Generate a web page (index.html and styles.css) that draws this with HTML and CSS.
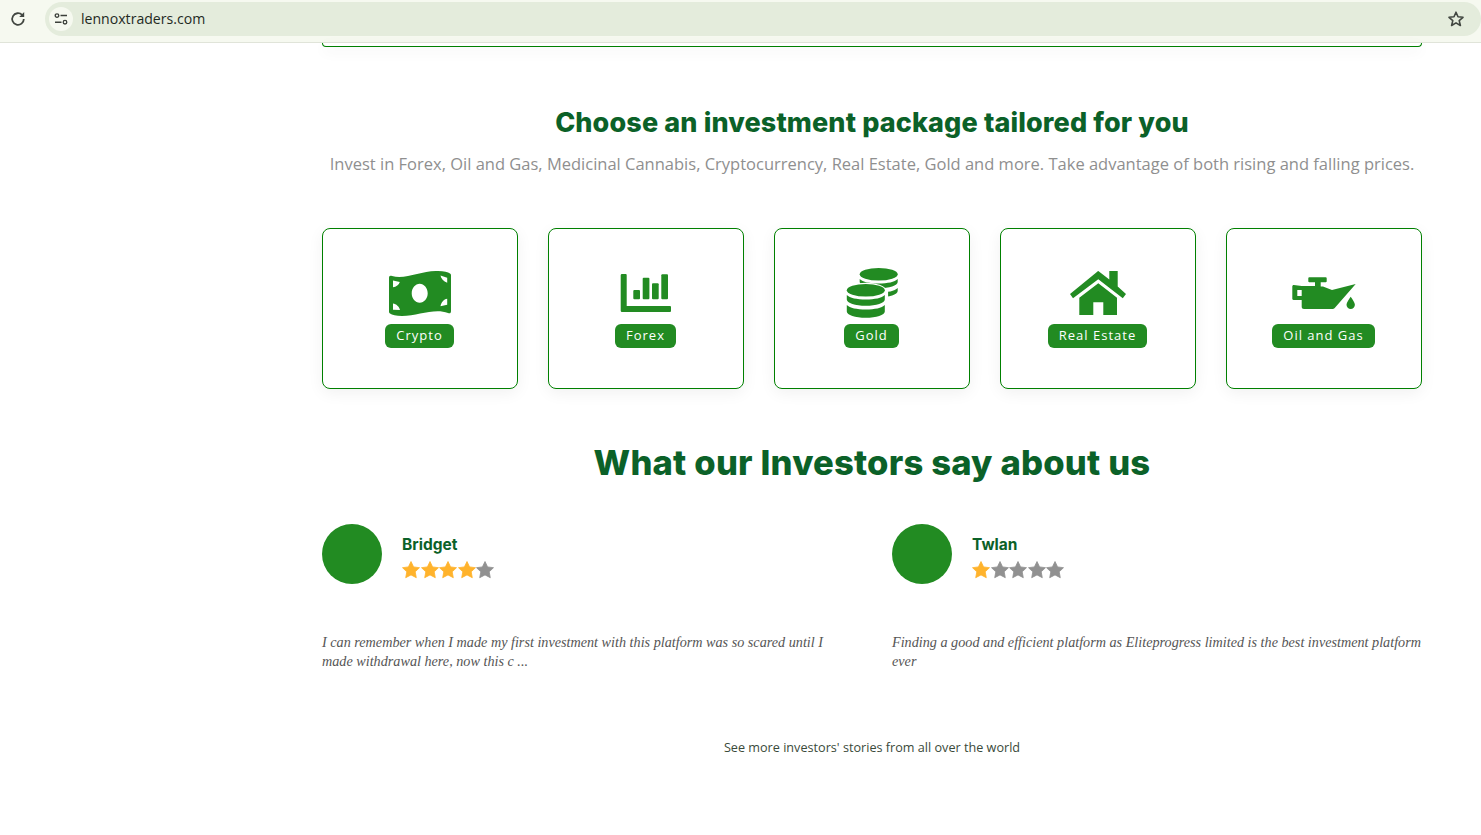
FILE: index.html
```html
<!DOCTYPE html>
<html lang="en">
<head>
<meta charset="utf-8">
<title>lennoxtraders.com</title>
<link rel="stylesheet" href="styles.css">
</head>
<body>
<header class="toolbar">
  <svg class="reload" viewBox="0 0 16 16"><path d="M13.800 8a5.800 5.800 0 1 1-1.700-4.100" fill="none" stroke="#414640" stroke-width="1.800"/><path d="M14.200 1v5H9.200z" fill="#414640"/></svg>
  <div class="omnibox">
    <span class="site-chip">
      <svg viewBox="0 0 14 12" class="tune"><circle cx="3" cy="2.600" r="1.800" fill="none" stroke="#3c403b" stroke-width="1.300"/><path d="M6.500 2.600h6.500M1 9.200h6.500" stroke="#3c403b" stroke-width="1.500"/><circle cx="11" cy="9.200" r="1.800" fill="none" stroke="#3c403b" stroke-width="1.300"/></svg>
    </span>
    <span class="url">lennoxtraders.com</span>
    <svg class="bookmark" viewBox="0 0 18 18"><path d="M9 2.200l2 4.600 5 .5-3.800 3.300 1.200 4.900L9 12.900l-4.400 2.600 1.200-4.900L2 7.300l5-.5z" fill="none" stroke="#414640" stroke-width="1.600" stroke-linejoin="round"/></svg>
  </div>
</header>

<main class="content">
  <div class="top-card"></div>

  <section class="packages">
    <h2 class="pkg-title">Choose an investment package tailored for you</h2>
    <p class="pkg-sub">Invest in Forex, Oil and Gas, Medicinal Cannabis, Cryptocurrency, Real Estate, Gold and more. Take advantage of both rising and falling prices.</p>

    <div class="pkg-grid">
      <article class="pkg-card">
        <svg class="pkg-icon" viewBox="0 0 64 50"><path fill-rule="evenodd" d="M1 10C1 8 2 7.300 4 8 18 12 34 2 50 3c6 .4 10 1 12 2.500 1 .5 1 1.500 1 2.500v35c0 2-1 2.800-3 2C46 40 30 48 14 48c-6 0-10-1-12-2.500-1-.5-1-1.500-1-2.500zM31.700 15.800c-4.400 0-8 4.300-8 9.500s3.600 9.500 8 9.500 8-4.300 8-9.500-3.600-9.500-8-9.500zM5 12.500v6.700c3.200-.2 6-2.200 6.800-5.100zM52.500 7.500c.5 3.200 3 6 6.700 7.200V9.800zM59.200 30.800c-3.400.6-6 3.500-6.700 7.400l6.700-1.500zM5 35.500v6.300l7 .2C11.300 38.500 8.300 36 5 35.500z"/></svg>
        <span class="pill">Crypto</span>
      </article>
      <article class="pkg-card">
        <svg class="pkg-icon" viewBox="0 0 64 50"><path d="M8 6h3.700a1 1 0 0 1 1 1v31H56a1 1 0 0 1 1 1v4a1 1 0 0 1-1 1H8a1.300 1.300 0 0 1-1.300-1.300V7.300A1.300 1.300 0 0 1 8 6z"/><rect x="19.300" y="22" width="6.700" height="9.300" rx="1"/><rect x="28.700" y="9.700" width="6.700" height="21.600" rx="1"/><rect x="38" y="15.300" width="6.700" height="16" rx="1"/><rect x="47.300" y="6.300" width="6.700" height="25" rx="1"/></svg>
        <span class="pill">Forex</span>
      </article>
      <article class="pkg-card">
        <svg class="pkg-icon" viewBox="0 0 64 50"><ellipse cx="38.700" cy="6.300" rx="19" ry="6.300"/><path d="M19.700 11v3c0 3.500 8.500 6.300 19 6.300s19-2.800 19-6.300v-3c-3 3-10 4.500-19 4.500s-16-1.500-19-4.500z"/><path d="M19.700 20v3c0 3.500 8.500 6.300 19 6.300s19-2.800 19-6.300v-3c-3 3-10 4.500-19 4.500s-16-1.500-19-4.500z"/><path d="M3.500 22.300h44.600V50H3.500z" fill="#fff"/><ellipse cx="25.800" cy="22.300" rx="19" ry="6.300" stroke="#fff" stroke-width="2.400" paint-order="stroke"/><path d="M6.800 27v4.500c0 3.500 8.500 6.300 19 6.300s19-2.800 19-6.300V27c-3 3-10 4.500-19 4.500s-16-1.500-19-4.500z"/><path d="M6.800 37v6.500c0 3.500 8.500 6.300 19 6.300s19-2.800 19-6.300V37c-3 3-10 4.500-19 4.500s-16-1.500-19-4.500z"/></svg>
        <span class="pill">Gold</span>
      </article>
      <article class="pkg-card">
        <svg class="pkg-icon" viewBox="0 0 64 50"><path d="M32.300 3L43.300 11.500V3h8.400v15.500L60 26l-3.200 4.300L32.300 11.300 7 30.300 4 26 30 4.800c.8-.7 1.600-1.800 2.300-1.800z"/><path fill-rule="evenodd" d="M32.300 15.300L51 29.800V47H37.300V34.300h-10V47H13.300V29.800z"/></svg>
        <span class="pill">Real Estate</span>
      </article>
      <article class="pkg-card">
        <svg class="pkg-icon" viewBox="0 0 64 50"><path fill-rule="evenodd" d="M17.300 9.300h16.400a1 1 0 0 1 1 1v3a1 1 0 0 1-1 1h-5v4.200h2.300L40 22l23.700-6-21 24c-.8.800-1.500 1-2.500 1H12c-1.400 0-2.300-1-2.300-2.300V32H1.500C.8 32 .3 31.500.3 30.800V18.500c0-.8.500-1.500 1.500-1.500l7.900 1h13.300v-3.700h-5.700a1 1 0 0 1-1-1v-3a1 1 0 0 1 1-1zM5.300 22v6h4.400v-6z"/><path d="M58.700 28.700c1.800 2.900 4.200 5.500 4.200 8.100a4.200 4.200 0 0 1-8.400 0c0-2.600 2.400-5.200 4.200-8.100z"/></svg>
        <span class="pill">Oil and Gas</span>
      </article>
    </div>
  </section>

  <section class="reviews">
    <h2 class="rev-title">What our Investors say about us</h2>
    <div class="rev-grid">
      <article class="review">
        <div class="person">
          <span class="avatar"></span>
          <div class="who">
            <h3 class="name">Bridget</h3>
            <div class="stars">
              <svg class="star on" viewBox="0 0 18 17"><path d="M9 .5l2.600 5.400 5.900.8-4.300 4.100 1.100 5.900L9 13.900l-5.300 2.800 1.100-5.900L.5 6.700l5.900-.8z"/></svg>
              <svg class="star on" viewBox="0 0 18 17"><path d="M9 .5l2.600 5.400 5.900.8-4.300 4.100 1.100 5.900L9 13.900l-5.300 2.800 1.100-5.900L.5 6.700l5.900-.8z"/></svg>
              <svg class="star on" viewBox="0 0 18 17"><path d="M9 .5l2.600 5.400 5.900.8-4.300 4.100 1.100 5.900L9 13.900l-5.300 2.800 1.100-5.900L.5 6.700l5.900-.8z"/></svg>
              <svg class="star on" viewBox="0 0 18 17"><path d="M9 .5l2.600 5.400 5.900.8-4.300 4.100 1.100 5.900L9 13.900l-5.300 2.800 1.100-5.900L.5 6.700l5.900-.8z"/></svg>
              <svg class="star" viewBox="0 0 18 17"><path d="M9 .5l2.600 5.400 5.900.8-4.300 4.100 1.100 5.900L9 13.900l-5.300 2.800 1.100-5.900L.5 6.700l5.900-.8z"/></svg>
            </div>
          </div>
        </div>
        <p class="quote">I can remember when I made my first investment with this platform was so scared until I made withdrawal here, now this c ...</p>
      </article>
      <article class="review">
        <div class="person">
          <span class="avatar"></span>
          <div class="who">
            <h3 class="name">Twlan</h3>
            <div class="stars">
              <svg class="star on" viewBox="0 0 18 17"><path d="M9 .5l2.600 5.400 5.900.8-4.300 4.100 1.100 5.900L9 13.900l-5.300 2.800 1.100-5.900L.5 6.700l5.900-.8z"/></svg>
              <svg class="star" viewBox="0 0 18 17"><path d="M9 .5l2.600 5.400 5.900.8-4.300 4.100 1.100 5.900L9 13.900l-5.300 2.800 1.100-5.900L.5 6.700l5.900-.8z"/></svg>
              <svg class="star" viewBox="0 0 18 17"><path d="M9 .5l2.600 5.400 5.900.8-4.300 4.100 1.100 5.900L9 13.900l-5.300 2.800 1.100-5.900L.5 6.700l5.900-.8z"/></svg>
              <svg class="star" viewBox="0 0 18 17"><path d="M9 .5l2.600 5.400 5.900.8-4.300 4.100 1.100 5.900L9 13.900l-5.300 2.800 1.100-5.900L.5 6.700l5.900-.8z"/></svg>
              <svg class="star" viewBox="0 0 18 17"><path d="M9 .5l2.600 5.400 5.900.8-4.300 4.100 1.100 5.900L9 13.900l-5.300 2.800 1.100-5.900L.5 6.700l5.900-.8z"/></svg>
            </div>
          </div>
        </div>
        <p class="quote">Finding a good and efficient platform as Eliteprogress limited is the best investment platform ever</p>
      </article>
    </div>
    <p class="more">See more investors' stories from all over the world</p>
  </section>
</main>
</body>
</html>
```

FILE: styles.css
```css
* { box-sizing: border-box; }
html, body { margin: 0; padding: 0; height: 100%; overflow: hidden; background: #fff; }
body { font-family: "Open Sans", sans-serif; }

.toolbar {
  height: 43px;
  background: #f6f9f0;
  border-bottom: 1px solid #e0e4d9;
  display: flex;
  align-items: flex-start;
  padding: 2px 0 0 10px;
}
.reload { width: 16px; height: 16px; margin: 9px 19px 0 0; flex: none; }
.omnibox {
  flex: 1;
  height: 34px;
  border-radius: 17px;
  background: #e4ecdc;
  display: flex;
  align-items: center;
  padding: 0 16px 0 4px;
}
.site-chip {
  width: 24px; height: 24px;
  border-radius: 50%;
  background: #f6f9f0;
  display: flex; align-items: center; justify-content: center;
  flex: none;
}
.tune { width: 14px; height: 12px; }
.url { margin: -2px 0 0 8px; font-size: 14.1px; color: #1f2a1f; flex: 1; }
.bookmark { width: 18px; height: 18px; flex: none; }

.content { width: 1100px; margin-left: 322px; }

.top-card {
  height: 4px;
  border: 1px solid #008000;
  border-top: 0;
  border-radius: 0 0 6px 6px;
  box-shadow: 0 4px 14px rgba(0,0,0,.07);
}

.pkg-title {
  margin: 59px 0 0;
  text-align: center;
  font-family: Inter, sans-serif;
  font-size: 27px;
  line-height: 33px;
  font-weight: 800;
  letter-spacing: .13px;
  color: #0b6128;
}
.pkg-sub {
  margin: 13px 0 0;
  text-align: center;
  font-size: 16.5px;
  line-height: 24px;
  color: #8f8f8f;
  white-space: nowrap;
}
.pkg-grid {
  margin-top: 52px;
  display: grid;
  grid-template-columns: repeat(5, 1fr);
  gap: 30px;
}
.pkg-card {
  height: 161px;
  border: 1px solid #008000;
  border-radius: 8px;
  background: #fff;
  box-shadow: 0 4px 16px rgba(0,0,0,.06);
  display: flex;
  flex-direction: column;
  align-items: center;
  padding-top: 39px;
}
.pkg-icon { width: 64px; height: 50px; fill: #228b22; display: block; flex: none; }
.pill {
  margin: 6px 1px 0 0;
  height: 24px;
  padding: 0 11px;
  border-radius: 6px;
  background: #228b22;
  color: #fff;
  font-size: 13px;
  line-height: 23px;
  letter-spacing: 1px;
}

.rev-title {
  margin: 52px 0 0;
  text-align: center;
  font-family: Inter, sans-serif;
  font-size: 34.6px;
  line-height: 42px;
  font-weight: 800;
  letter-spacing: .2px;
  color: #0b6128;
}
.rev-grid {
  margin-top: 41px;
  display: grid;
  grid-template-columns: 1fr 1fr;
  gap: 40px;
}
.person { display: flex; align-items: center; gap: 20px; height: 60px; }
.avatar { width: 60px; height: 60px; border-radius: 50%; background: #228b22; flex: none; }
.who { padding-top: 4px; }
.name {
  margin: 0;
  font-family: Inter, sans-serif;
  font-size: 15.5px;
  line-height: 20px;
  font-weight: 700;
  color: #0b6128;
}
.stars { display: flex; gap: .6px; margin-top: 6px; }
.star { width: 18px; height: 17px; fill: #919191; stroke: #919191; stroke-width: .8; stroke-linejoin: round; overflow: visible; display: block; }
.star.on { fill: #ffb32c; stroke: #ffb32c; }
.quote {
  margin: 49px 0 0;
  font-family: "Liberation Serif", serif;
  font-style: italic;
  font-size: 14.2px;
  line-height: 19px;
  color: #555;
}
.more {
  margin: 67px 0 0;
  text-align: center;
  font-size: 12.65px;
  line-height: 18px;
  color: #3a4a3a;
}
```
